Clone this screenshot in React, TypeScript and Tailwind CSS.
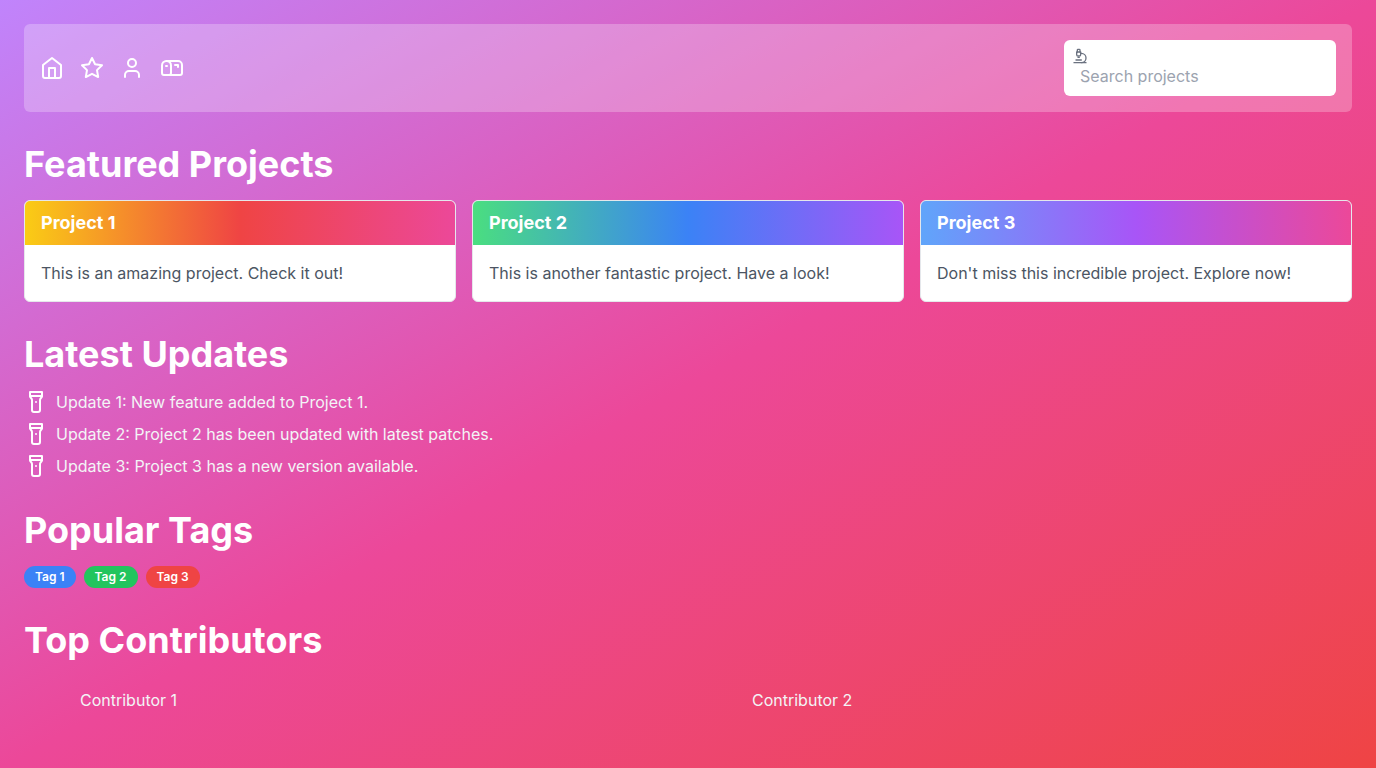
import React from "react";
import { User, Mailbox, Microscope } from "lucide-react";

const iconProps = {
  viewBox: "0 0 24 24",
  fill: "none",
  stroke: "currentColor",
  strokeWidth: 2,
  strokeLinecap: "round",
  strokeLinejoin: "round",
  "aria-hidden": true,
} as const;

function HomeIcon({ className }: { className?: string }) {
  return (
    <svg {...iconProps} className={className}>
      <path d="m3 9 9-7 9 7v11a2 2 0 0 1-2 2H5a2 2 0 0 1-2-2z" />
      <polyline points="9 22 9 12 15 12 15 22" />
    </svg>
  );
}

function StarIcon({ className }: { className?: string }) {
  return (
    <svg {...iconProps} className={className}>
      <polygon points="12 2 15.09 8.26 22 9.27 17 14.14 18.18 21.02 12 17.77 5.82 21.02 7 14.14 2 9.27 8.91 8.26 12 2" />
    </svg>
  );
}

function FlashlightIcon({ className }: { className?: string }) {
  return (
    <svg {...iconProps} className={className}>
      <path d="M18 6c0 2-2 2-2 4v10a2 2 0 0 1-2 2h-4a2 2 0 0 1-2-2V10c0-2-2-2-2-4V2h12z" />
      <line x1="6" x2="18" y1="6" y2="6" />
      <line x1="12" x2="12" y1="12" y2="12" />
    </svg>
  );
}

const navItems = [
  { label: "Home", Icon: HomeIcon },
  { label: "Favorites", Icon: StarIcon },
  { label: "Profile", Icon: User },
  { label: "Mail", Icon: Mailbox },
];

const projects = [
  { title: "Project 1", text: "This is an amazing project. Check it out!", header: "from-[#facc15] via-[#ef4444] to-[#ec4899]" },
  { title: "Project 2", text: "This is another fantastic project. Have a look!", header: "from-[#4ade80] via-[#3b82f6] to-[#a855f7]" },
  { title: "Project 3", text: "Don't miss this incredible project. Explore now!", header: "from-[#60a5fa] via-[#a855f7] to-[#ec4899]" },
];

const updates = [
  "Update 1: New feature added to Project 1.",
  "Update 2: Project 2 has been updated with latest patches.",
  "Update 3: Project 3 has a new version available.",
];

const tags = [
  { label: "Tag 1", color: "bg-[#3b82f6]" },
  { label: "Tag 2", color: "bg-[#22c55e]" },
  { label: "Tag 3", color: "bg-[#ef4444]" },
];

const contributors = ["Contributor 1", "Contributor 2"];

function Section({ title, children }: { title: string; children: React.ReactNode }) {
  return (
    <section className="mt-8">
      <h2 className="mb-4 text-4xl font-bold">{title}</h2>
      {children}
    </section>
  );
}

export default function App() {
  return (
    <div className="min-h-screen bg-linear-to-br/srgb from-[#c084fc] via-[#ec4899] to-[#ef4444] p-6 font-['Inter',sans-serif] text-white">
      <header className="flex items-center justify-between rounded-md bg-white/25 p-4">
        <nav className="flex gap-4">
          {navItems.map(({ label, Icon }) => (
            <a key={label} href="#" aria-label={label}>
              <Icon className="size-6" />
            </a>
          ))}
        </nav>
        <label className="block w-68 rounded-md bg-white p-2">
          <Microscope className="size-4 text-[#6b7280]" />
          <input
            type="text"
            aria-label="Search projects"
            placeholder="Search projects"
            className="block h-6 w-full bg-transparent px-2 text-base text-gray-700 outline-none placeholder:text-[#9ca3af]"
          />
        </label>
      </header>

      <Section title="Featured Projects">
        <div className="grid grid-cols-3 gap-4">
          {projects.map((p) => (
            <article key={p.title} className="overflow-hidden rounded-md border border-gray-200 bg-white">
              <h3 className={`bg-linear-to-r/srgb px-4 py-2 text-lg font-bold ${p.header}`}>{p.title}</h3>
              <p className="p-4 text-base text-[#4b5563]">{p.text}</p>
            </article>
          ))}
        </div>
      </Section>

      <Section title="Latest Updates">
        <ul className="space-y-2">
          {updates.map((u) => (
            <li key={u} className="flex items-center gap-2">
              <FlashlightIcon className="size-6" />
              <span className="text-[#f3f4f6]">{u}</span>
            </li>
          ))}
        </ul>
      </Section>

      <Section title="Popular Tags">
        <div className="flex gap-2">
          {tags.map((t) => (
            <span key={t.label} className={`rounded-full border border-transparent px-2.5 py-0.5 text-xs font-semibold ${t.color}`}>
              {t.label}
            </span>
          ))}
        </div>
      </Section>

      <Section title="Top Contributors">
        <ul className="grid grid-cols-2 gap-4">
          {contributors.map((c) => (
            <li key={c} className="flex h-12 items-center pl-14 text-[#f3f4f6]">{c}</li>
          ))}
        </ul>
      </Section>
    </div>
  );
}
